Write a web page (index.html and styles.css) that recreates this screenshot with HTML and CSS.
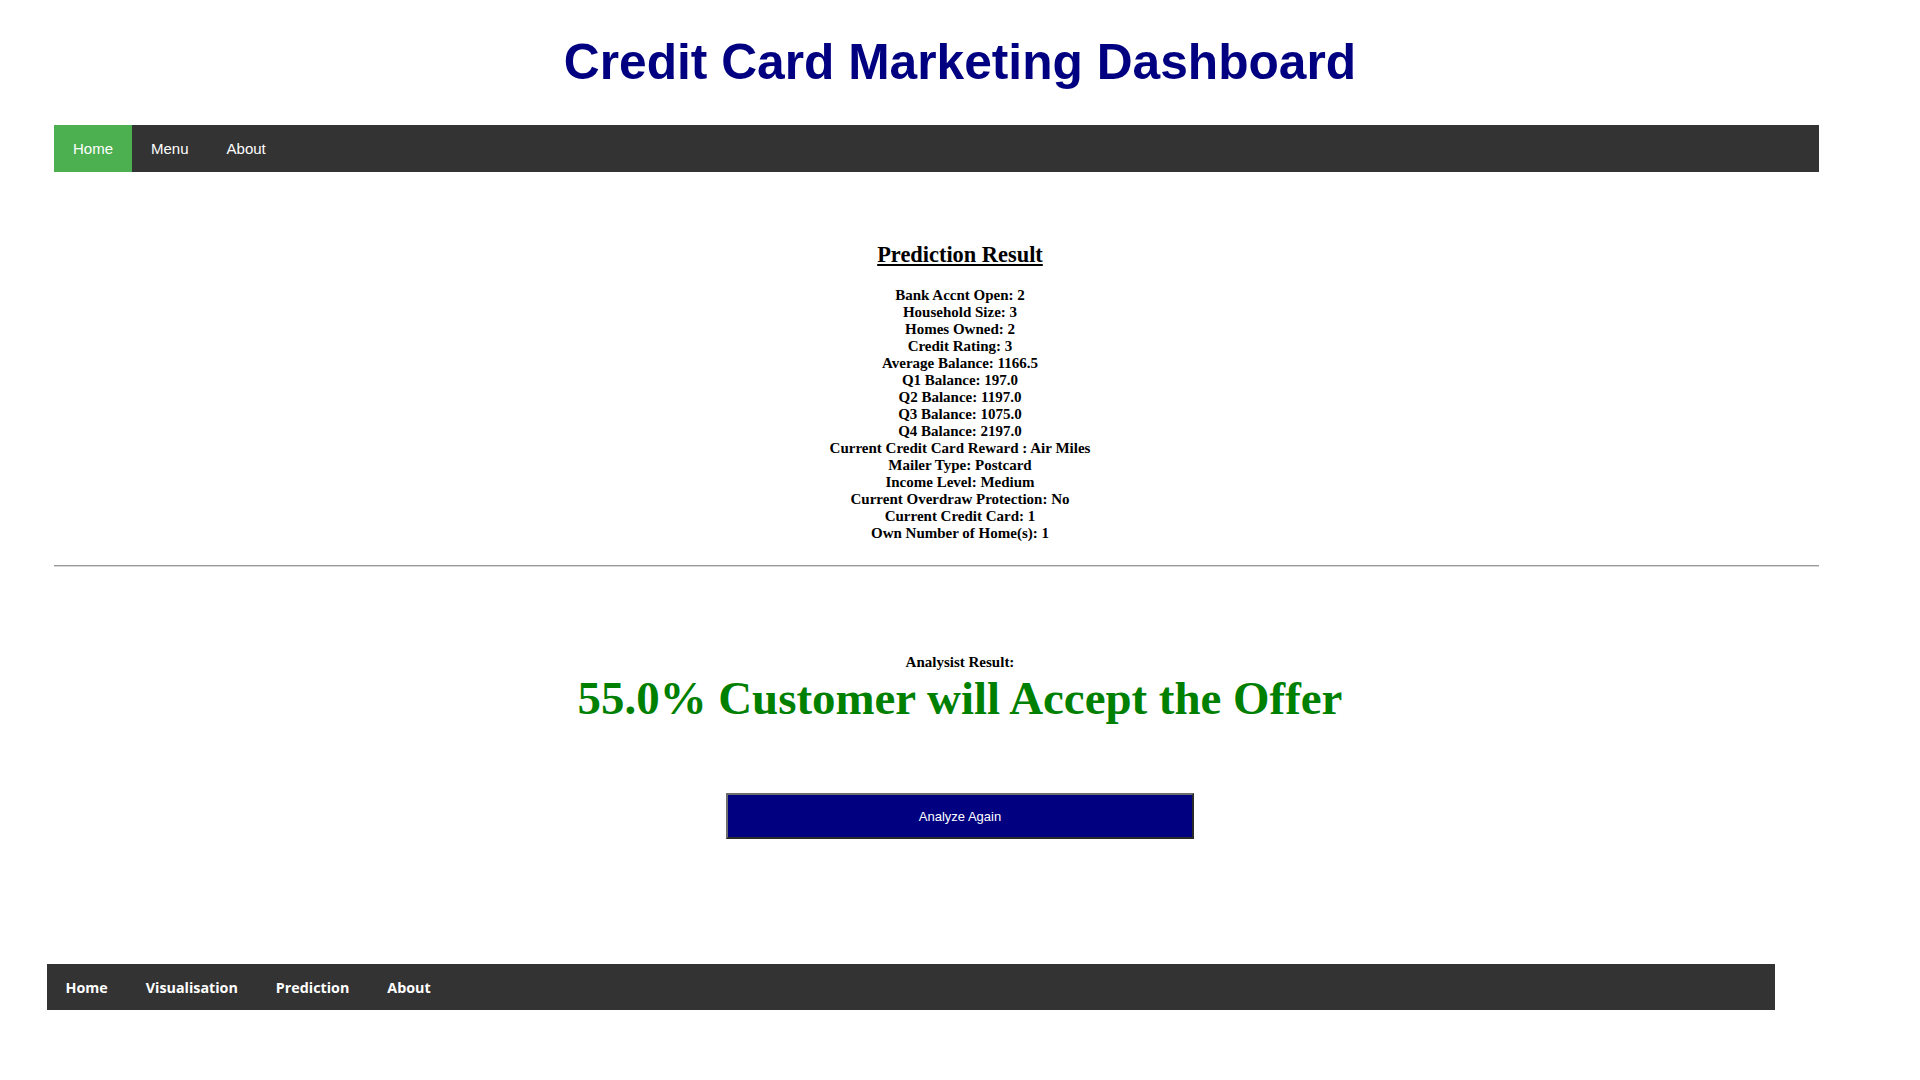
FILE: index.html
```html
<!DOCTYPE html>
<html lang="en">
<head>
<meta charset="utf-8">
<title>Credit Card Marketing Dashboard</title>
<link rel="stylesheet" href="styles.css">
</head>
<body>
<header class="site-header">
  <h1 class="title">Credit Card Marketing Dashboard</h1>
</header>
<nav class="topnav">
  <a class="topnav-link active" href="#">Home</a>
  <a class="topnav-link" href="#">Menu</a>
  <a class="topnav-link" href="#">About</a>
</nav>
<main class="result">
  <h2 class="result-title">Prediction Result</h2>
  <div class="result-list">
    <div class="result-item">Bank Accnt Open: 2</div>
    <div class="result-item">Household Size: 3</div>
    <div class="result-item">Homes Owned: 2</div>
    <div class="result-item">Credit Rating: 3</div>
    <div class="result-item">Average Balance: 1166.5</div>
    <div class="result-item">Q1 Balance: 197.0</div>
    <div class="result-item">Q2 Balance: 1197.0</div>
    <div class="result-item">Q3 Balance: 1075.0</div>
    <div class="result-item">Q4 Balance: 2197.0</div>
    <div class="result-item">Current Credit Card Reward : Air Miles</div>
    <div class="result-item">Mailer Type: Postcard</div>
    <div class="result-item">Income Level: Medium</div>
    <div class="result-item">Current Overdraw Protection: No</div>
    <div class="result-item">Current Credit Card: 1</div>
    <div class="result-item">Own Number of Home(s): 1</div>
  </div>
</main>
<hr class="divider">
<section class="analysis">
  <p class="analysis-label">Analysist Result:</p>
  <p class="analysis-value">55.0% Customer will Accept the Offer</p>
  <button class="again" type="button">Analyze Again</button>
</section>
<footer class="footnav">
  <a class="footnav-link" href="#">Home</a>
  <a class="footnav-link" href="#">Visualisation</a>
  <a class="footnav-link" href="#">Prediction</a>
  <a class="footnav-link" href="#">About</a>
</footer>
</body>
</html>
```
FILE: styles.css
```css
html, body {
  margin: 0;
  padding: 0;
  background: #ffffff;
}

body {
  font-family: "Liberation Serif", "Times New Roman", serif;
  color: #000000;
}

.site-header {
  padding-top: 34px;
}

.title {
  margin: 0;
  font-family: "Liberation Sans", Arial, sans-serif;
  font-weight: bold;
  font-size: 49.7px;
  line-height: 56px;
  color: #000080;
  text-align: center;
}

.topnav {
  display: flex;
  margin: 35px 101px 0 54px;
  height: 47px;
  background: #333333;
}

.topnav-link {
  display: block;
  padding: 0 19px;
  line-height: 47px;
  font-family: "Liberation Sans", Arial, sans-serif;
  font-size: 15px;
  color: #ffffff;
  text-decoration: none;
}

.topnav-link.active {
  background: #4caf50;
}

.result {
  margin-top: 70px;
  text-align: center;
}

.result-title {
  margin: 0;
  font-size: 22.4px;
  line-height: 26px;
  font-weight: bold;
  text-decoration: underline;
}

.result-list {
  margin-top: 19px;
  font-size: 15px;
  line-height: 17px;
  font-weight: bold;
}

.divider {
  margin: 23px 101px 0 54px;
  border: 0;
  border-top: 1px solid #9a9a9a;
  border-bottom: 1px solid #d6d6d6;
  height: 0;
}

.analysis {
  margin-top: 87px;
  text-align: center;
}

.analysis-label {
  margin: 0;
  font-size: 15px;
  line-height: 17px;
  font-weight: bold;
}

.analysis-value {
  margin: 0;
  font-size: 46.9px;
  line-height: 54px;
  font-weight: bold;
  color: #008000;
}

.again {
  display: block;
  box-sizing: border-box;
  width: 468px;
  height: 46px;
  margin: 68px auto 0;
  padding: 0;
  background: #000080;
  color: #ffffff;
  font-family: "Liberation Sans", Arial, sans-serif;
  font-size: 13px;
  border-style: solid;
  border-width: 2px;
  border-color: #6e6e6e #2a2a2a #2a2a2a #6e6e6e;
}

.footnav {
  display: flex;
  align-items: center;
  gap: 38px;
  box-sizing: border-box;
  width: 1728px;
  height: 46px;
  margin: 125px 0 0 47px;
  padding-left: 18.5px;
  background: #333333;
}

.footnav-link {
  font-family: "Open Sans", "DejaVu Sans", sans-serif;
  font-weight: 700;
  font-size: 14.3px;
  color: #ffffff;
  text-decoration: none;
}
```
